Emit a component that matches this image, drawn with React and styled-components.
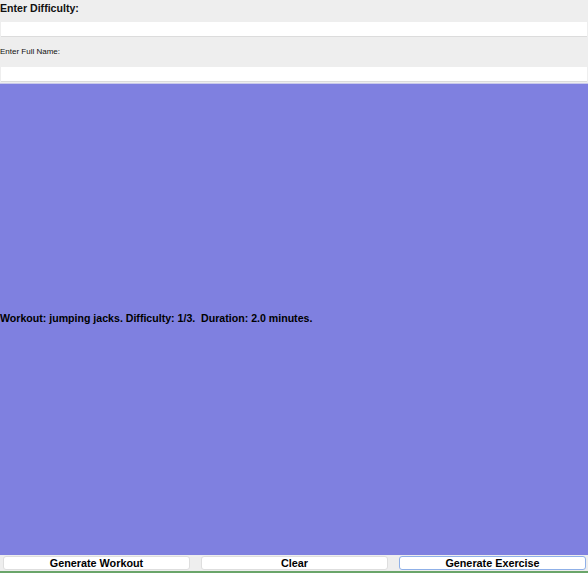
import React from "react";
import styled, { createGlobalStyle } from "styled-components";

const Global = createGlobalStyle`
  html, body { margin: 0; padding: 0; }
  body { background: #eeeeee; font-family: "Liberation Sans", Arial, sans-serif; }
`;

const Page = styled.div`
  width: 588px;
  height: 573px;
  display: flex;
  flex-direction: column;
  background: #eeeeee;
  overflow: hidden;
`;

const Label = styled.div`
  font-size: ${(p) => p.$size}px;
  font-weight: ${(p) => (p.$bold ? 700 : 400)};
  color: #111;
  height: ${(p) => p.$h}px;
  line-height: ${(p) => p.$h}px;
  padding-top: ${(p) => p.$top}px;
  margin-bottom: ${(p) => p.$gap}px;
`;

const Field = styled.input`
  display: block;
  box-sizing: border-box;
  margin: 0 1px;
  width: 586px;
  height: 15px;
  border: none;
  border-bottom: 1px solid #dcdcdc;
  background: #fff;
  outline: none;
  padding: 0 4px;
  font-size: 11px;
`;

const Panel = styled.div`
  flex: 1;
  margin-top: 1px;
  background: #7f80e0;
  border-top: 1px solid #c9c9ea;
  display: flex;
  align-items: center;
  padding-bottom: 4px;
  font-size: 10.6px;
  font-weight: 700;
  color: #000;
`;

const ButtonRow = styled.div`
  display: grid;
  grid-template-columns: 1fr 1fr 1fr;
  gap: 11px;
  padding: 1px 2px 0 3px;
  height: 18px;
  box-sizing: border-box;
  border-bottom: 2px solid #6aa56a;
`;

const Button = styled.button`
  height: 14px;
  margin: 0;
  padding: 0;
  background: #fff;
  border: 1px solid ${(p) => (p.$focus ? "#8fb0e8" : "#dedede")};
  border-radius: 3px;
  font-family: "Liberation Sans", Arial, sans-serif;
  font-size: 10.8px;
  font-weight: 700;
  line-height: 12px;
  color: #000;
`;

export default function App() {
  return (
    <Page>
      <Global />
      <Label $size={10.6} $bold $h={14} $top={1} $gap={7}>Enter Difficulty:</Label>
      <Field />
      <Label $size={8} $h={14} $top={8} $gap={8}>Enter Full Name:</Label>
      <Field />
      <Panel>Workout: jumping jacks. Difficulty: 1/3.&nbsp; Duration: 2.0 minutes.</Panel>
      <ButtonRow>
        <Button>Generate Workout</Button>
        <Button>Clear</Button>
        <Button $focus>Generate Exercise</Button>
      </ButtonRow>
    </Page>
  );
}
